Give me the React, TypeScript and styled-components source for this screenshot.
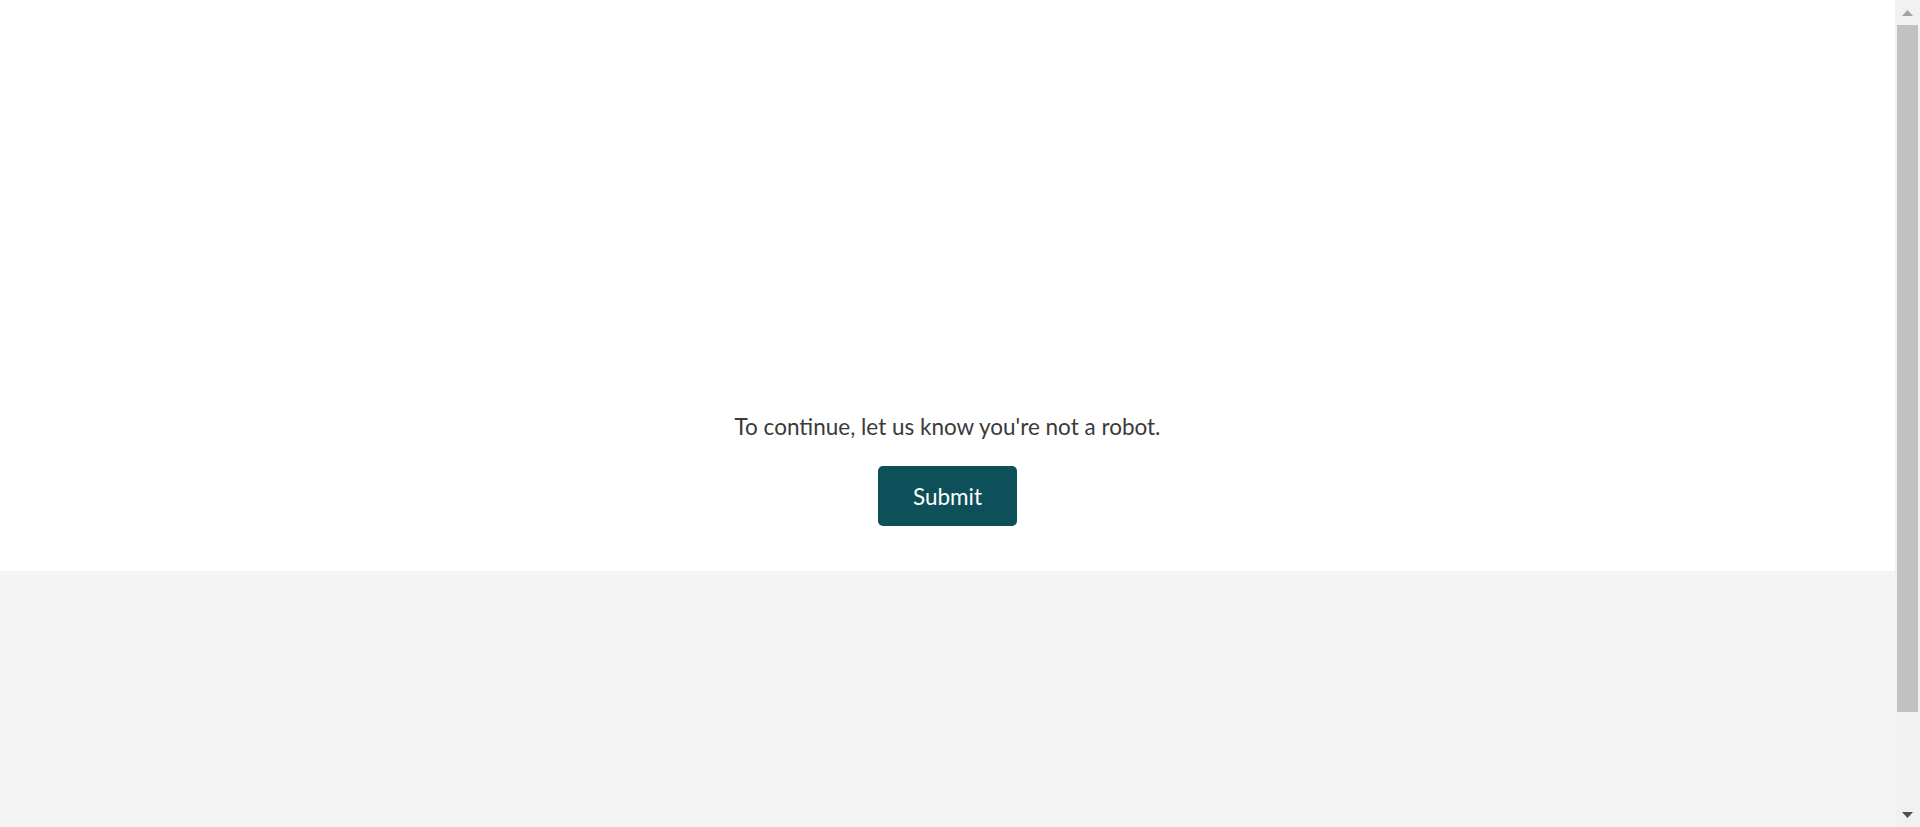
import React from "react";
import styled, { createGlobalStyle } from "styled-components";

const Global = createGlobalStyle`
  html, body { margin: 0; padding: 0; background: #ffffff; }
  body { font-family: Lato, "Open Sans", sans-serif; }
  * { box-sizing: border-box; }
`;

const Frame = styled.div`
  display: grid;
  grid-template-columns: 1fr 25px;
  align-items: start;
`;

const Page = styled.div`
  display: flex;
  flex-direction: column;
  min-height: 935px;
`;

const Challenge = styled.main`
  height: 571px;
  background: #ffffff;
  display: flex;
  flex-direction: column;
  align-items: center;
  justify-content: flex-end;
  gap: 21px;
  padding-bottom: 45px;
`;

const Prompt = styled.p`
  margin: 0;
  font-size: 22.5px;
  line-height: 37.5px;
  color: #3a3a3a;
`;

const SubmitButton = styled.button`
  height: 60px;
  width: 139px;
  border: none;
  border-radius: 5px;
  background: #0e5059;
  color: #ffffff;
  font-family: Lato, sans-serif;
  font-size: 22.5px;
  cursor: pointer;
`;

const Footer = styled.footer`
  flex: 1;
  background: #f4f4f4;
`;

const ScrollRail = styled.div`
  position: sticky;
  top: 0;
  height: 827px;
  background: #f1f1f1;
  display: flex;
  flex-direction: column;
`;

const ScrollArrow = styled.div`
  height: 25px;
  display: flex;
  align-items: center;
  justify-content: center;
`;

const ScrollTrack = styled.div`
  flex: 1;
  padding: 0 2px;
`;

const ScrollThumb = styled.div`
  height: 687px;
  background: #c1c1c1;
`;

export default function App() {
  return (
    <>
      <Global />
      <Frame>
        <Page>
          <Challenge>
            <Prompt>To continue, let us know you're not a robot.</Prompt>
            <SubmitButton type="button">Submit</SubmitButton>
          </Challenge>
          <Footer />
        </Page>
        <ScrollRail aria-hidden="true">
          <ScrollArrow>
            <svg width="11" height="6" viewBox="0 0 11 6">
              <polygon points="0,6 5.5,0 11,6" fill="#a3a3a3" />
            </svg>
          </ScrollArrow>
          <ScrollTrack>
            <ScrollThumb />
          </ScrollTrack>
          <ScrollArrow>
            <svg width="11" height="6" viewBox="0 0 11 6">
              <polygon points="0,0 11,0 5.5,6" fill="#505050" />
            </svg>
          </ScrollArrow>
        </ScrollRail>
      </Frame>
    </>
  );
}
